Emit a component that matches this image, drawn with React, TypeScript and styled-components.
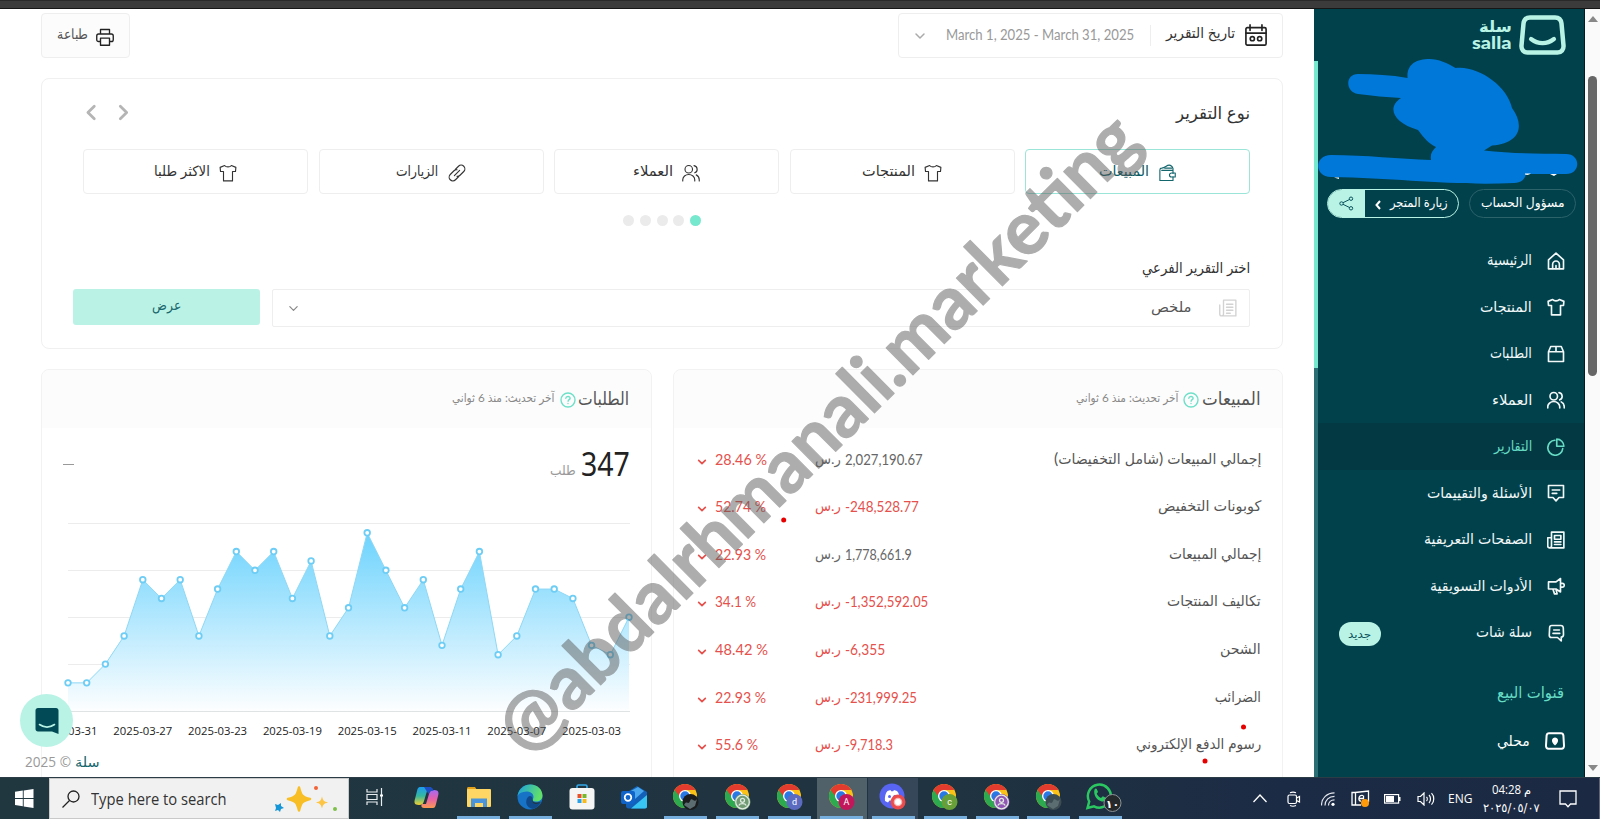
import React, { useLayoutEffect, useRef, useState } from 'react';
import styled, { createGlobalStyle } from 'styled-components';

const Global = createGlobalStyle`
  * { box-sizing: border-box; }
  body { margin: 0; overflow: hidden; background: #fff; font-family: Lato, 'DejaVu Sans Condensed', 'DejaVu Sans', sans-serif; }
  svg { display: block; flex: none; }
`;

/* ---------- text that is set to an exact measure ---------- */
const Measure = styled.span<{ $w: number; $size: number; $color: string; $weight: number; $family?: string; $rtl: boolean }>`
  display: inline-flex;
  flex: none;
  width: ${(p) => p.$w}px;
  direction: ${(p) => (p.$rtl ? 'rtl' : 'ltr')};
  font-size: ${(p) => p.$size}px;
  font-weight: ${(p) => p.$weight};
  color: ${(p) => p.$color};
  line-height: 20px;
  white-space: nowrap;
  ${(p) => (p.$family ? `font-family: ${p.$family};` : '')}
  & > span {
    display: inline-block;
    flex: none;
    transform-origin: ${(p) => (p.$rtl ? 'right' : 'left')} center;
  }
`;
type TextProps = { w: number; size?: number; color?: string; weight?: number; family?: string; ltr?: boolean; children: React.ReactNode };
function Text({ w, size = 14, color = '#444', weight = 400, family, ltr, children }: TextProps) {
  const ref = useRef<HTMLSpanElement>(null);
  const [scale, setScale] = useState(1);
  useLayoutEffect(() => {
    if (ref.current) setScale(w / ref.current.offsetWidth);
  }, [w, size]);
  return (
    <Measure $w={w} $size={size} $color={color} $weight={weight} $family={family} $rtl={!ltr}>
      <span ref={ref} style={{ transform: `scaleX(${scale})` }}>{children}</span>
    </Measure>
  );
}

/* ---------- icons ---------- */
type IconProps = { d: React.ReactNode; size?: number; color?: string; sw?: number };
const Icon = ({ d, size = 18, color = 'currentColor', sw = 1.8 }: IconProps) => (
  <svg width={size} height={size} viewBox="0 0 24 24" fill="none" stroke={color} strokeWidth={sw} strokeLinejoin="round" strokeLinecap="round">{d}</svg>
);
const ic = {
  home: <><path d="M2 10.500 12 1.500l10 9V22.500H2z" /><path d="M7.500 22v-5.500a4.500 4.500 0 0 1 9 0V22M12 22v-4" /></>,
  shirt: <path d="M7.500 2 1.500 4.500 2 10h4v12.500h12V10h4l.5-5.500-6-2.500c-2 2.500-7 2.500-9 0z" />,
  box: <><path d="M2 9 5 2h14l3 7v13H2zM2 9h20M12 2v7" /></>,
  users: <><circle cx="9" cy="7" r="5" /><path d="M1 22.500v-1.500a8 7 0 0 1 16 0v1.500M16 2.200a5 5 0 0 1 1 9.600M19 14.500c2.500 1.200 4 3.500 4 6.500v1.500" /></>,
  pie: <><path d="M10.500 3A10 10 0 1 0 21 14" /><path d="M13 1.500v9.500h9.500A9.500 9.500 0 0 0 13 1.500z" /></>,
  chat: <><path d="M2 2h20v16h-6l-4 4.500L8 18H2zM7 8h10M7 12.500h6" /></>,
  news: <><path d="M6 1.500h16.500v21h-19A2.500 2.500 0 0 1 1 20V9h5M6 1.500V20a2.500 2.500 0 0 1-2.500 2.500M10 6h8.500v5H10zM10 14.500h8.500M10 18h8.500" /></>,
  horn: <><path d="M18 2v18l-6-4H2V6.500h10zM18 8.500h2.500a2.500 2.500 0 0 1 0 5H18M8 16.500l2 6h3.500l-1.500-6" /></>,
  salla: <><path d="M6.500 2h12c2 0 3 1 3.200 3l.3 9c0 2-1 3.500-3 3.500V22.500l-5-4.500H6c-2 0-3-1-3-3l.5-10c0-2 1-3 3-3zM9 8h7.500M8 12.500h9" /></>,
  wallet: <><path d="M5 8.500h15v4M20 17v5H2.500V8C2.500 6.500 3.500 5.500 5 5.500c5-.5 6-4 10-4 2.500 0 4 2 5 4.500v2.500" /><path d="M23 12h-5a2.700 2.700 0 0 0 0 5.400h5zM9 5.500h9" /></>,
  link: <><path d="m8.500 15.500 7-7M10 7l4-4a4.800 4.800 0 0 1 7 7l-5 5a4.800 4.800 0 0 1-4 1.400M14 17l-4 4a4.800 4.800 0 0 1-7-7l5-5a4.800 4.800 0 0 1 4-1.400" /></>,
  down: <path d="m4 8 8 8 8-8" />,
};

/* ---------- frame ---------- */
const Screen = styled.div` display: flex; flex-direction: column; width: 1600px; height: 819px; position: relative; overflow: hidden; `;
const BrowserEdge = styled.div` flex: 0 0 9px; background: #3b3b3b; border-top: 1px solid #292929; border-bottom: 1px solid #161616; `;
const Viewport = styled.div` flex: 0 0 768px; display: flex; overflow: hidden; `;

/* ---------- main page ---------- */
const Main = styled.main` flex: 0 0 1314px; padding: 4px 31px 0 41px; position: relative; `;
const TopRow = styled.div` display: flex; justify-content: space-between; height: 45px; `;
const PrintButton = styled.button`
  width: 89px; height: 45px; border: 1px solid #eeeeee; border-radius: 4px; background: #fcfcfc;
  display: flex; align-items: center; justify-content: space-between; padding: 0 15px 0 15px; 
  & > span { margin-top: -3px; } & > svg { margin-top: 3px; }
`;
const DateBox = styled.div`
  width: 385px; height: 45px; border: 1px solid #eeeeee; border-radius: 4px;
  display: flex; direction: rtl; align-items: center; padding: 0 15px;
  & > svg:first-child { margin: -1px 0 0 10px; } & > span { margin-top: -7px; } & > i + span { margin-top: -2px; }
`;
const Divider = styled.i` width: 1px; height: 21px; background: #eee; margin: 0 15px 0 16px; `;
const Push = styled.i` flex: 1; `;
const ReportCard = styled.section` margin-top: 20px; height: 271px; border: 1px solid #f0f0f0; border-radius: 8px; padding: 22px 32px 0 31px; `;
const CardHead = styled.div` display: flex; direction: rtl; justify-content: space-between; align-items: center; height: 23px; padding-left: 9px; `;
const Arrows = styled.div` display: flex; direction: ltr; gap: 13px; `;
const Tabs = styled.div` display: flex; direction: rtl; gap: 10.500px; margin: 25px 0 0 10px; `;
const Tab = styled.div<{ $on?: boolean }>`
  flex: 1; height: 45px; border: 1px solid ${(p) => (p.$on ? '#9be5d8' : '#eeeeee')}; border-radius: 4px;
  display: flex; align-items: center; justify-content: center; gap: 9px; color: ${(p) => (p.$on ? '#14666d' : '#333')};
  & > span { margin-top: -1px; } & > svg { margin-top: 2px; }
`;
const Dots = styled.div` display: flex; direction: rtl; justify-content: center; gap: 5.700px; margin: 21px 0 0 1px; `;
const Dot = styled.i<{ $on?: boolean }>` width: 11px; height: 11px; border-radius: 50%; background: ${(p) => (p.$on ? '#76e8cd' : '#ebebeb')}; `;
const SubTitle = styled.div` direction: rtl; height: 20px; margin-top: 31px; `;
const PickRow = styled.div` display: flex; direction: rtl; gap: 12px; margin-top: 12px; `;
const Select = styled.div`
  flex: 1; height: 38px; border: 1px solid #eeeeee; border-radius: 2px; display: flex; align-items: center; padding: 0 12px 0 15px;
  & > span { margin: -2px 28px 0 0; }
`;
const ShowButton = styled.button` width: 187px; height: 36px; border: 0; border-radius: 3px; background: #baf3e6; padding-bottom: 5px; `;

const Panels = styled.div` display: flex; direction: rtl; gap: 21px; margin-top: 20px; `;
const Panel = styled.section` flex: 1 1 0; min-width: 0; height: 440px; border: 1px solid #f2f2f2; border-radius: 8px; `;
const PanelHead = styled.header`
  height: 58px; background: #fcfcfc; border-radius: 8px 8px 0 0; display: flex; align-items: center; padding-right: 21px; padding-bottom: 2px;
  & > svg { margin: 4px 3px 0 5px; }
`;
const Rows = styled.div` padding: 7px 21px 0 0; `;
const Row = styled.div` display: flex; height: 47.550px; align-items: center; `;
const Cell = styled.div<{ $w: number }>` width: ${(p) => p.$w}px; display: flex; direction: ltr; align-items: center; gap: 4px; `;
const LabelCell = styled.div` width: 321px; display: flex; direction: rtl; `;
const Percent = styled(Cell)` gap: 8px; margin-right: 23px; & > svg { margin-top: 6px; } `;
const Total = styled.div` display: flex; align-items: center; height: 68px; padding: 3px 21px 0; gap: 5px; & > span:nth-child(2) { margin-top: 12px; } `;
const Dash = styled.i` width: 11px; height: 1px; background: #999; margin-top: 1px; `;
const ChartBox = styled.div` margin: 25px 9px 0 0; direction: ltr; & > svg { overflow: visible; } `;
const Footer = styled.footer` position: absolute; left: 25px; bottom: 5px; display: flex; gap: 4px; `;
const ChatBubble = styled.div` position: absolute; left: 20px; top: 685px; width: 53px; height: 53px; border-radius: 50%; background: #b9f3e5; display: grid; place-items: center; `;

/* ---------- sidebar ---------- */
const Sidebar = styled.aside` flex: 0 0 271px; background: #00414b; direction: rtl; display: flex; border-right: 1px solid #011c22; position: relative; `;
const Nav = styled.div` flex: 1; display: flex; flex-direction: column; `;
const Track = styled.div` width: 4px; padding-top: 52px; background: #00414b; display: flex; flex-direction: column; `;
const Thumb = styled.i` height: 307px; background: #76e8cd; `;
const Rail = styled.i` flex: 1; background: #2b6f75; `;
const Brand = styled.div` display: flex; height: 52px; padding: 6px 18px 0 0; gap: 7px; `;
const BrandWords = styled.div`
  display: flex; flex-direction: column; padding-top: 3px;
  & > span { height: 17px; line-height: 15px; } & > span:last-child { height: 16px; line-height: 16px; }
`;
const Account = styled.div` display: flex; height: 29px; gap: 10px; margin: 128px 8px 0 0; `;
const Pill = styled.div<{ $w: number; $c: string }>`
  width: ${(p) => p.$w}px; height: 29px; border: 1px solid ${(p) => p.$c}; border-radius: 15px; display: flex; align-items: center; overflow: hidden; padding-right: 10px;
  & > span { margin-top: -3px; }
`;
const Share = styled.div` width: 37px; height: 100%; background: #b9f3e5; display: grid; place-items: center; margin-right: auto; `;
const Item = styled.div<{ $on?: boolean }>`
  flex: none; height: 46.500px; display: flex; align-items: center; padding: 1px 19px 0 0; gap: 15px; background: ${(p) => (p.$on ? '#023943' : 'transparent')};
  color: ${(p) => (p.$on ? '#67dcc5' : '#f2f8f8')}; & > span { margin-top: -1px; }
`;
const Menu = styled.div` margin-top: 19px; `;
const Badge = styled.div` width: 42px; height: 24px; border-radius: 12px; background: #b9f3e5; margin: 3px auto 0 21px; display: grid; place-items: center; `;
const Group = styled.div` flex: none; padding: 26px 20px 0 0; height: 62px; `;
const Scribble = styled.svg` position: absolute; left: 0; top: 46px; `;

const Scroll = styled.div` flex: 0 0 15px; background: #fafafa; display: flex; flex-direction: column; align-items: center; justify-content: space-between; padding: 7px 0 6px; `;
const ScrollThumb = styled.i` width: 9px; height: 300px; border-radius: 5px; background: #666; margin: 0 0 auto; `;
const Tri = styled.i<{ $up?: boolean }>` border: 5px solid transparent; border-top: ${(p) => (p.$up ? 0 : 6)}px solid #888; border-bottom: ${(p) => (p.$up ? 6 : 0)}px solid #888; ${(p) => (p.$up ? 'border-top-color: transparent; margin-bottom: 54px;' : 'border-bottom-color: transparent;')} `;

/* ---------- taskbar ---------- */
const Taskbar = styled.div` flex: 1; display: flex; background: linear-gradient(90deg, #203740, #1f3340 60%, #1c2b45 80%, #1b2942); border-top: 1px solid #2b3c46; color: #fff; font-family: 'Open Sans', 'DejaVu Sans', sans-serif; `;
const Start = styled.div` width: 49px; display: grid; place-items: center; `;
const Search = styled.div` width: 300px; background: #f1f1f1; border: 1px solid #c9c9c9; display: flex; align-items: center; padding: 0 10px 0 12px; gap: 11px; `;
const Slot = styled.div<{ $bg?: string; $run?: boolean }>`
  flex: 0 0 51.850px; display: flex; justify-content: center; align-items: center;
  background: linear-gradient(${(p) => p.$bg || 'transparent'}, ${(p) => p.$bg || 'transparent'}) center / 50px 100% no-repeat;
  & > div { width: 43px; height: 100%; display: grid; place-items: center; border-bottom: 3px solid ${(p) => (p.$run ? '#76aede' : 'transparent')}; }
`;
const Tray = styled.div` margin-left: auto; display: flex; align-items: center; padding-right: 3px; `;
const TrayIcon = styled.div<{ $w: number }>` width: ${(p) => p.$w}px; display: grid; place-items: center; `;
const Clock = styled.div` width: 70px; display: flex; flex-direction: column; align-items: center; padding-right: 3px; & > span { line-height: 18px; } `;
const ShowDesk = styled.i` width: 1px; align-self: stretch; background: #5b6577; `;

const Overlay = styled.svg` position: absolute; left: 0; top: 0; pointer-events: none; `;

const series = [3, 3, 5, 8, 14, 12, 14, 8, 13, 17, 15, 17, 12, 16, 8, 11, 19, 15, 11, 14, 7, 13, 17, 6, 8, 13, 13, 12, 7, 6, 10];
function Chart() {
  const x = (i: number) => 26 + i * 18.700;
  const y = (v: number) => 190 - v * 9.380;
  const line = series.map((v, i) => `${x(i)},${y(v)}`).join(' ');
  return (
    <svg width="598" height="225" viewBox="0 0 598 225">
      <defs>
        <linearGradient id="fill" gradientUnits="userSpaceOnUse" x1="0" y1="12" x2="0" y2="190">
          <stop offset="0" stopColor="#6dd3fd" /><stop offset="1" stopColor="#fdfeff" />
        </linearGradient>
      </defs>
      {[2.5, 49.5, 96.500, 143.500].map((g) => <line key={g} x1="26" x2="588" y1={g} y2={g} stroke="#ececec" />)}
      <polygon points={`26,190 ${line} 587,190`} fill="url(#fill)" />
      <line x1="26" x2="588" y1="190.500" y2="190.500" stroke="#dfe3e4" />
      <polyline points={line} fill="none" stroke="#8fd8f5" strokeWidth="1" />
      {series.map((v, i) => <circle key={i} cx={x(i)} cy={y(v)} r="2.800" fill="#fff" stroke="#6dcdf5" strokeWidth="1.800" />)}
      {['31', '27', '23', '19', '15', '11', '07', '03'].map((d, i) => (
        <text key={d} x={x(i * 4)} y="214" fontSize="11.500" textAnchor="middle" textLength="59" lengthAdjust="spacingAndGlyphs" fill="#222" fontFamily="Open Sans">{`2025-03-${d}`}</text>
      ))}
    </svg>
  );
}

const Help = () => (
  <svg width="16" height="16" viewBox="0 0 16 16" fill="none" stroke="#6fe0c8" strokeWidth="1.400" strokeLinecap="round"><circle cx="8" cy="8" r="7" /><path d="M5.800 6.300c.2-2.600 4.500-2.400 4.300.1-.1 1.300-2 1.300-2 2.800M8 11.400v.2" /></svg>
);

const sales: [string, number, string, number, string, number][] = [
  ['إجمالي المبيعات (شامل التخفيضات)', 207, '2,027,190.67', 78, '28.46 %', 52],
  ['كوبونات التخفيض', 103, '-248,528.77', 74, '52.74 %', 51],
  ['إجمالي المبيعات', 92, '1,778,661.9', 67, '22.93 %', 51],
  ['تكاليف المنتجات', 94, '-1,352,592.05', 83, '34.1 %', 41],
  ['الشحن', 41, '-6,355', 40, '48.42 %', 53],
  ['الضرائب', 46, '-231,999.25', 72, '22.93 %', 51],
  ['رسوم الدفع الإلكتروني', 125, '-9,718.3', 48, '55.6 %', 43],
];
const tabs: [string, number, React.ReactNode][] = [
  ['المبيعات', 50, ic.wallet], ['المنتجات', 53, ic.shirt], ['العملاء', 40, ic.users], ['الزيارات', 42, ic.link], ['الاكثر طلبا', 56, ic.shirt],
];
const nav: [string, number, React.ReactNode][] = [
  ['الرئيسية', 45, ic.home], ['المنتجات', 52, ic.shirt], ['الطلبات', 42, ic.box], ['العملاء', 40, ic.users], ['التقارير', 38, ic.pie],
  ['الأسئلة والتقييمات', 105, ic.chat], ['الصفحات التعريفية', 108, ic.news], ['الأدوات التسويقية', 102, ic.horn], ['سلة شات', 56, ic.salla],
];

/* ---------- taskbar drawings ---------- */
const Chrome = ({ badge, mark, kind }: { badge: string; mark?: string; kind?: 'person' | 'photo' }) => (
  <svg width="28" height="28" viewBox="0 0 28 28">
    <circle cx="13" cy="13" r="12" fill="#fbc116" />
    <path d="M13 13 2.600 7A12 12 0 0 0 13 25l5-9z" fill="#2da94f" />
    <path d="M2.600 7A12 12 0 0 1 23.400 7H13l-5 7z" fill="#e33b2e" />
    <circle cx="13" cy="13" r="6" fill="#fff" /><circle cx="13" cy="13" r="4.700" fill="#2a78e4" />
    <circle cx="18.500" cy="19" r="8" fill={badge} />
    {kind === 'person' && <g fill="none" stroke="#dfeadf" strokeWidth="1.300"><circle cx="18.500" cy="19" r="6.800" /><circle cx="18.500" cy="17.300" r="2" /><path d="M14.800 22.500c1-2.500 6.400-2.500 7.400 0" /></g>}
    {kind === 'photo' && <path d="M12 22c3-6 4 1 6-4s4 3 7-2l-2 7-5 3z" fill="#5c6d72" />}
    {mark && <text x="18.500" y="22.300" textAnchor="middle" fontSize="9" fill="#fff" fontFamily="Roboto">{mark}</text>}
  </svg>
);
const Windows = () => <svg width="19" height="19" viewBox="0 0 19 19" fill="#fff"><path d="M0 2.700 7.800 1.600v7.400H0zM8.700 1.500 18.500 0v9H8.700zM0 9.900h7.800v7.300L0 16.100zM8.700 9.900h9.800V19l-9.800-1.500z" /></svg>;
const Sparkles = () => (
  <svg width="64" height="30" viewBox="0 0 64 30">
    <path d="M25 3.500c2 8 3 9.500 11 11.500-8 2-9 3.500-11 11.500-2-8-3-9.500-11-11.500 8-2 9-3.500 11-11.500z" fill="#f8be25" stroke="#f8be25" strokeWidth="2.500" strokeLinejoin="round" />
    <path d="M48 12.500c1 4 2 5 6 6-4 1-5 2-6 6-1-4-2-5-6-6 4-1 5-2 6-6z" fill="#fdc545" /><path d="m1 20 3 1 3-2v3l3 2-3 1-1 3-2-2-3 1 1-3z" fill="#1596d6" />
    <circle cx="42" cy="4" r="2" fill="#f26438" /><circle cx="61" cy="25" r="2" fill="#7fc04b" />
  </svg>
);
const TaskView = () => <svg width="18" height="18" viewBox="0 0 18 18" fill="none" stroke="#e8edef" strokeWidth="1.200"><path d="M1 1v3h10V1M1 17v-3h10v3M1 6.500h10v5H1zM15.500 0v18" /><path d="M14 6.500h3v2h-3z" fill="#fff" stroke="none" /></svg>;
const Copilot = () => (
  <svg width="25" height="23" viewBox="0 0 25 23">
    <defs>
      <linearGradient id="cpa" x2="0" y2="1"><stop stopColor="#1b9df0" /><stop offset=".5" stopColor="#35b7a0" /><stop offset="1" stopColor="#f3d02f" /></linearGradient>
      <linearGradient id="cpb" x2="0" y2="1"><stop stopColor="#a56af2" /><stop offset=".5" stopColor="#e660a8" /><stop offset="1" stopColor="#fb9950" /></linearGradient>
    </defs>
    <path d="M6 1h9c3 0 3 3 2 4l-4 0-3 10c-1 3-2 4-5 4-5 0-5-3-4-6L3 5c.7-3 1.500-4 3-4z" fill="url(#cpa)" />
    <path d="M19 22h-9c-3 0-3-3-2-4h4l3-10c1-3 2-4 5-4 5 0 5 3 4 6l-2 8c-.7 3-1.500 4-3 4z" fill="url(#cpb)" />
    <path d="M10 1h5c3 0 4 1 4.500 4-3-1-4 1-5 3z" fill="#1e4fc4" />
  </svg>
);
const Folder = () => <svg width="24" height="21" viewBox="0 0 24 21"><path d="M0 1.500C0 .6.600 0 1.500 0H8l2 3H0z" fill="#e4a21a" /><rect y="2" width="24" height="18" rx="1" fill="#fdd663" /><path d="M4 20v-8.500h16V20h-4v-4H8v4z" fill="#4a94dc" /></svg>;
const Edge = () => (
  <svg width="26" height="26" viewBox="0 0 26 26">
    <defs><linearGradient id="eg" x2="1" y2=".3"><stop stopColor="#1b9fe0" /><stop offset="1" stopColor="#61e06a" /></linearGradient></defs>
    <circle cx="13" cy="13" r="12.500" fill="#1673c5" />
    <path d="M.5 12C1.500 5 7 .5 13.500.5 21 .5 25.500 6 25.500 11.500c0 4-3 6-6.500 6-3 0-4-1-3-2.500 2-4-2-8-6.500-7.500C5 8 2 9 .5 12z" fill="url(#eg)" />
    <path d="M15.500 15.500c-2 3 3 5.500 8.500 2.500-2 4-5 6-8 7-7-1-8.500-8-5-12 2-2 5-.5 4.500 2.500z" fill="#114a8b" />
    <path d="M16 15c-1 2 0 3.500 4 3.500 2 0 4-1 4.500-1.500-4 5-9.500 3-9.500-.5z" fill="#20353f" />
  </svg>
);
const Store = () => <svg width="26" height="26" viewBox="0 0 26 26"><path d="M8 5V2.500C8 1.500 8.500 1 9.500 1h7c1 0 1.500.5 1.500 1.500V5" fill="none" stroke="#35a8e8" strokeWidth="1.600" /><rect x=".5" y="4" width="25" height="21.500" rx="3" fill="#f5f5f5" /><path d="M8.500 10h4v4h-4z" fill="#e8502a" /><path d="M13.500 10h4v4h-4z" fill="#78b82a" /><path d="M8.500 15h4v4h-4z" fill="#2aa0e6" /><path d="M13.500 15h4v4h-4z" fill="#f8b91d" /></svg>;
const Outlook = () => <svg width="26" height="23" viewBox="0 0 26 23"><path d="M5 7 16 0l10 6v14c0 1.500-1 2.500-2.500 2.500h-16C6 22.500 5 21.500 5 20z" fill="#1260b8" /><path d="m8 6 9-5 6 4-9 8z" fill="#4aa7ee" /><path d="m26 9-16 13.500h14c1.500 0 2-1 2-2z" fill="#39c5f3" /><rect y="5" width="14" height="13" rx="2" fill="#0f63c9" /><circle cx="7" cy="11.500" r="3.300" fill="none" stroke="#fff" strokeWidth="1.700" /></svg>;
const Discord = () => (
  <svg width="28" height="28" viewBox="0 0 28 28"><circle cx="13" cy="13" r="12.500" fill="#5865f2" /><path d="M6 18c-.5-4 .5-8 2.500-10l3-1 .7 1.300h2L15 7l3 1c2 2 3 6 2.500 10l-3 1.500-1.500-2h-5.500l-1.500 2z" fill="#fff" /><circle cx="10.500" cy="13.500" r="1.500" fill="#5865f2" /><circle cx="15.700" cy="13.500" r="1.500" fill="#5865f2" /><circle cx="19" cy="19" r="7.500" fill="#ec4b4b" /><circle cx="19" cy="19" r="4.300" fill="#fff" opacity=".6" /><circle cx="19" cy="19" r="3" fill="#fff" /></svg>
);
const Whatsapp = () => (
  <svg width="43" height="30" viewBox="-7 0 43 30"><path d="m1.500 26 1.700-6.500A11.500 11.500 0 1 1 8 24.300z" fill="none" stroke="#2bc862" strokeWidth="2.500" /><path d="M8.500 7.500c1-1.500 2-1 2.500 0l1 2.500-1.300 1.800c1 2 2.300 3.200 4.300 4.200l1.800-1.800 3 1.500c.5 3-2 4-4 3.700C11 18.500 7 13 8.500 7.500z" fill="#2bc862" /><circle cx="26.500" cy="21" r="8.500" fill="#26292c" stroke="#8a9297" /><text x="26.500" y="25.500" fontSize="11" fontWeight="700" fill="#fff" textAnchor="middle" fontFamily="DejaVu Sans">١٠</text></svg>
);

export default function App() {
  return (
    <Screen>
      <Global />
      <BrowserEdge />
      <Viewport>
        <Main>
          <TopRow>
            <PrintButton>
              <Text w={31} size={14} color="#555">طباعة</Text>
              <Icon size={18} color="#222" d={<path d="M6 8V2h12v6M6 18H3.500C2 18 1 17 1 15.500V10.500C1 9 2 8 3.500 8h17C22 8 23 9 23 10.500v5c0 1.500-1 2.500-2.500 2.500H18M6 13.500h12V23H6z" />} />
            </PrintButton>
            <DateBox>
              <Icon size={22} color="#222" d={<><rect x="1" y="4" width="22" height="19" rx="1.500" /><path d="M1 10h22M5.500 1v6M18.500 1v6" /><circle cx="8" cy="16" r="2.300" /><circle cx="16" cy="16" r="2.300" /></>} />
              <Text w={69} size={15} color="#333">تاريخ التقرير</Text>
              <Divider />
              <Text w={188.500} size={14.500} color="#999" ltr>March 1, 2025 - March 31, 2025</Text>
              <Push />
              <Icon size={12} color="#aaa" sw={3} d={ic.down} />
            </DateBox>
          </TopRow>
          <ReportCard>
            <CardHead>
              <Text w={74} size={17} color="#333">نوع التقرير</Text>
              <Arrows>
                <Icon size={19} color="#b5b5b5" sw={3.500} d={<path d="m15.500 4-8 8 8 8" />} />
                <Icon size={19} color="#b5b5b5" sw={3.500} d={<path d="m8 4 8 8-8 8" />} />
              </Arrows>
            </CardHead>
            <Tabs>
              {tabs.map(([t, w, d], i) => (
                <Tab key={t} $on={i === 0}><Icon size={18} sw={1.500} d={d} /><Text w={w} size={14} color={i ? '#333' : '#0d5b63'}>{t}</Text></Tab>
              ))}
            </Tabs>
            <Dots><Dot $on /><Dot /><Dot /><Dot /><Dot /></Dots>
            <SubTitle><Text w={108} size={15} color="#333">اختر التقرير الفرعي</Text></SubTitle>
            <PickRow>
              <Select>
                <Icon size={18} color="#d2d2d2" sw={1.800} d={<path d="M6 1.500h16.500v21h-19A2.500 2.500 0 0 1 1 20V8M6 1.500V20a2.500 2.500 0 0 1-2.500 2.500M10 7h8.500M10 11h8.500M10 15h8.500M10 19h5" />} />
                <Text w={40} size={14} color="#555">ملخص</Text>
                <Push />
                <Icon size={11} color="#888" sw={2.600} d={ic.down} />
              </Select>
              <ShowButton><Text w={29} size={14} color="#19666c">عرض</Text></ShowButton>
            </PickRow>
          </ReportCard>
          <Panels>
            <Panel>
              <PanelHead>
                <Text w={59} size={18} color="#555">المبيعات</Text><Help /><Text w={102} size={12} color="#888">آخر تحديث: منذ 6 ثواني</Text>
              </PanelHead>
              <Rows>
                {sales.map(([label, lw, value, vw, pct, pw], i) => {
                  const c = i === 0 || i === 2 ? '#666' : '#e5514c';
                  return (
                    <Row key={label}>
                      <LabelCell><Text w={lw} size={14.500} color="#555">{label}</Text></LabelCell>
                      <Cell $w={125}><Text w={26} size={14} color={c}>ر.س</Text><Text w={vw} size={15.500} color={c} ltr>{value}</Text></Cell>
                      <Percent $w={95}><Icon size={10} color="#e5514c" sw={4} d={ic.down} /><Text w={pw} size={15.500} color="#e5514c" ltr>{pct}</Text></Percent>
                    </Row>
                  );
                })}
              </Rows>
            </Panel>
            <Panel>
              <PanelHead>
                <Text w={51} size={18} color="#555">الطلبات</Text><Help /><Text w={102} size={12} color="#888">آخر تحديث: منذ 6 ثواني</Text>
              </PanelHead>
              <Total><Text w={49} size={32} color="#222" family="'Noto Sans','Open Sans'" ltr>347</Text><Text w={26} size={13} color="#999">طلب</Text><Push /><Dash /></Total>
              <ChartBox><Chart /></ChartBox>
            </Panel>
          </Panels>
          <ChatBubble>
            <svg width="24" height="26" viewBox="0 0 24 26"><path d="M3 0h18c1.500 0 2.500 1 2.500 2.500V26L17 23.500H3C1.500 23.500.5 22.500.5 21V2.500C.5 1 1.500 0 3 0z" fill="#024b56" /><path d="M4.500 16.500c5 3.500 10 3.500 15 0" fill="none" stroke="#b9f3e5" strokeWidth="1.600" strokeLinecap="round" /></svg>
          </ChatBubble>
          <Footer><Text w={46} size={14.500} color="#999" family="'Open Sans'" ltr>2025 ©</Text><Text w={24} size={14} color="#14666d">سلة</Text></Footer>
        </Main>

        <Sidebar>
          <Nav>
            <Brand>
              <svg width="47" height="40" viewBox="0 0 47 40" fill="none" stroke="#b9f3e5" strokeLinecap="round"><path d="M11 2.500h25c4 0 6 2 6.500 6l2 22c.3 4-2 7-6 7h-30c-4 0-6.300-3-6-7l2-22c.5-4 2.500-6 6.500-6z" strokeWidth="4.500" /><path d="M12 24c7 5.500 16 5.500 23 0" strokeWidth="4.200" /></svg>
              <BrandWords><Text w={33} size={16} weight={700} color="#b9f3e5">سلة</Text><Text w={40} size={17} weight={900} color="#b9f3e5" ltr>salla</Text></BrandWords>
            </Brand>
            <Account>
              <Pill $w={107} $c="#2c626a"><Text w={84} size={13} color="#fff">مسؤول الحساب</Text></Pill>
              <Pill $w={132} $c="#b9f3e5"><Text w={58} size={13} color="#fff">زيارة المتجر</Text>
                <svg width="22" height="12" viewBox="0 0 22 12" fill="none" stroke="#fff" strokeWidth="2"><path d="M12 3 8.500 7l3.500 4" /></svg>
                <Share><svg width="15" height="15" viewBox="0 0 15 15" fill="none" stroke="#0b545d"><circle cx="2.500" cy="7.500" r="1.700" /><circle cx="12" cy="2.700" r="1.700" /><circle cx="12" cy="12.300" r="1.700" /><path d="m4 6.700 6.500-3.200M4 8.300l6.500 3.200" /></svg></Share>
              </Pill>
            </Account>
            <Menu>
              {nav.map(([t, w, d], i) => (
                <Item key={t} $on={i === 4}><Icon size={18} sw={2.200} d={d} /><Text w={w} size={14.500} color={i === 4 ? '#67dcc5' : '#f2f8f8'}>{t}</Text>
                  {i === 8 && <Badge><Text w={23} size={11} color="#0b545d">جديد</Text></Badge>}
                </Item>
              ))}
            </Menu>
            <Group><Text w={67} size={15.500} color="#67dcc5">قنوات البيع</Text></Group>
            <Item>
              <svg width="20" height="18" viewBox="0 0 20 18" fill="none" stroke="#fff"><path d="M4 1.200h12c1.500 0 2.200 1 2.400 2.300l.6 10c.1 2-.8 3.200-2.500 3.200h-13C1.800 16.700.9 15.500 1 13.500l.6-10C1.800 2.200 2.500 1.200 4 1.200z" strokeWidth="2" /><path d="M10 13.500c-5-4-3-8 0-8s5 4 0 8z" fill="#fff" stroke="none" /></svg>
              <Text w={33} size={14.500} color="#fff">محلي</Text>
            </Item>
          </Nav>
          <Track><Thumb /><Rail /></Track>
          <Scribble width="271" height="135" viewBox="1314 55 271 135">
            <g fill="#0078d9">
              <path d="M1358 74c16 0 33 1 49.500 4-1-14 9-19 22-19 9 0 18 4 26 9 22-3 52 18 56.500 40 12 16 10 35-20 37.500l-8 5c25 3 50 3 82 3.500 15 0 15 20 0 20h-40c-1 5-5 9-12 9-63 3-113-5-183-6-17 0-17-22 0-22 35 0 68 4 100 5-1-6 1-9 5-13-8-4-12-9-18-17-24-7-32-22-17-32-15-1-28-2-43-4-13-2-13-20 0-20z" />
            </g>
            <g fill="#fff"><path d="M1525 174.500c2 .8 4 .5 6-1h-6zM1550 174h7l-3 2zM1334 177.500h5v1.500z" /></g>
          </Scribble>
        </Sidebar>
        <Scroll><Tri $up /><ScrollThumb /><Tri /></Scroll>
      </Viewport>

      <Taskbar>
        <Start><Windows /></Start>
        <Search>
          <svg width="18" height="18" viewBox="0 0 18 18" fill="none" stroke="#222" strokeWidth="1.300"><circle cx="11.500" cy="6.500" r="5.500" /><path d="m7.500 10.500-7 7" /></svg>
          <Text w={136} size={15.500} color="#333" family="'Open Sans'" ltr>Type here to search</Text>
          <Push /><Sparkles />
        </Search>
        <Slot><div><TaskView /></div></Slot>
        <Slot><div><Copilot /></div></Slot>
        <Slot $run><div><Folder /></div></Slot>
        <Slot $run><div><Edge /></div></Slot>
        <Slot><div><Store /></div></Slot>
        <Slot><div><Outlook /></div></Slot>
        <Slot $run><div><Chrome badge="#1a1c1e" kind="photo" /></div></Slot>
        <Slot $run><div><Chrome badge="#6f9a72" kind="person" /></div></Slot>
        <Slot $run><div><Chrome badge="#5c6bc0" mark="d" /></div></Slot>
        <Slot $run $bg="#50616a"><div><Chrome badge="#c2185b" mark="A" /></div></Slot>
        <Slot $run $bg="#354759"><div><Discord /></div></Slot>
        <Slot $run><div><Chrome badge="#689f38" mark="c" /></div></Slot>
        <Slot $run><div><Chrome badge="#9055b5" kind="person" /></div></Slot>
        <Slot $run><div><Chrome badge="#3d4c52" kind="photo" /></div></Slot>
        <Slot $run><div><Whatsapp /></div></Slot>
        <Tray>
          <TrayIcon $w={34}><svg width="14" height="9" viewBox="0 0 14 9" fill="none" stroke="#fff" strokeWidth="1.300"><path d="m.5 8 6.500-7 6.500 7" /></svg></TrayIcon>
          <TrayIcon $w={34}><svg width="14" height="16" viewBox="0 0 14 16" fill="none" stroke="#fff" strokeWidth="1.200"><rect x="1" y="4" width="8.500" height="8.500" rx="1.500" /><path d="m9.500 7 3-1.500v5.500l-3-1.500M3 1.800c2-1 4-1 6 0M3 14.500c2 1 4 1 6 0" /></svg></TrayIcon>
          <TrayIcon $w={33}><svg width="14" height="14" viewBox="0 0 14 14" fill="none" stroke="#e5e8ee" strokeWidth="1.200"><path d="M.5 13.500C.5 6 6 .8 13.500.8M4 13.500C4 8 8 4.300 13.500 4.300M7.500 13.500c0-3.500 2.500-5.700 6-5.700" /><circle cx="12" cy="12.300" r="1.600" fill="#fff" stroke="none" /></svg></TrayIcon>
          <TrayIcon $w={32}><svg width="19" height="18" viewBox="0 0 19 18" fill="none" stroke="#fff" strokeWidth="1.300"><path d="M4 2.500 17.500 1v11M4 2.500H1v12.500h9M4.500 15V2.500M12 5.500C7.500 4 6.500 11.500 10 11M8 8.500h4.500V5.500" /><circle cx="14" cy="13" r="4" fill="#ff9b0a" stroke="none" /></svg></TrayIcon>
          <TrayIcon $w={33}><svg width="17" height="10" viewBox="0 0 17 10"><rect x=".6" y=".6" width="14" height="8.500" fill="none" stroke="#fff" strokeWidth="1.200" /><path d="M2 2h8v6H2zM15 3h1.500v4H15z" fill="#fff" /></svg></TrayIcon>
          <TrayIcon $w={33}><svg width="18" height="14" viewBox="0 0 18 14" fill="none" stroke="#fff" strokeWidth="1.200"><path d="M1 4.500h2.500L7 1v12L3.500 9.500H1zM9.500 5c1 1 1 3 0 4M12 3c2 2 2 6 0 8M14.500 1.200c3 3 3 8.500 0 11.500" /></svg></TrayIcon>
          <TrayIcon $w={36}><Text w={24} size={12.500} color="#fff" family="'Open Sans'" ltr>ENG</Text></TrayIcon>
          <Clock><Text w={39} size={12} color="#fff" family="'Open Sans','DejaVu Sans'" ltr>04:28 م</Text><Text w={57} size={12} color="#fff" family="'DejaVu Sans'" ltr>٢٠٢٥/٠٥/٠٧</Text></Clock>
          <TrayIcon $w={40}><svg width="18" height="18" viewBox="0 0 18 18" fill="none" stroke="#fff" strokeWidth="1.300"><path d="M1 1h16v13h-5.500L9 16.700 6.500 14H1z" /></svg></TrayIcon>
          <TrayIcon $w={8} />
        </Tray>
        <ShowDesk />
      </Taskbar>

      <Overlay width="1600" height="819" viewBox="0 0 1600 819">
        <g opacity=".49">
          <text transform="translate(527 758) rotate(-44.800)" fontSize="74" fontFamily="Lato" fontWeight="700" textLength="870" lengthAdjust="spacing" fill="#5a5a5a" stroke="#5a5a5a" strokeWidth="1.200" strokeLinejoin="round">@abdalrhmanali.marketing</text>
        </g>
        <g fill="#e60000"><circle cx="783.700" cy="520" r="2.500" /><circle cx="1243.500" cy="727" r="2.500" /><circle cx="1205" cy="761" r="2.500" /></g>
      </Overlay>
    </Screen>
  );
}
